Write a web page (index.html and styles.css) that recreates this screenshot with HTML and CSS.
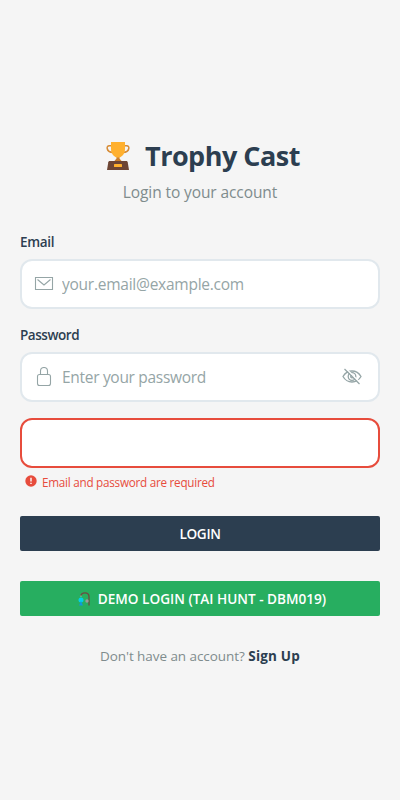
FILE: index.html
```html
<!DOCTYPE html>
<html lang="en">
<head>
<meta charset="utf-8">
<title>Trophy Cast</title>
<link rel="stylesheet" href="styles.css">
</head>
<body>
<main class="login">
  <h1 class="title">
    <svg class="trophy" viewBox="0 0 24 28" aria-hidden="true">
      <path d="M6 3.700H3.300C1.500 3.700.9 5 1.200 6.500c.4 2.300 2.800 3.800 5.800 4M18 3.700h2.700c1.800 0 2.400 1.300 2.100 2.800-.4 2.300-2.800 3.800-5.800 4" fill="none" stroke="#d68b35" stroke-width="1.500"/>
      <path d="M10.500 13h3v3.500l2.500 3H8l2.500-3z" fill="#cb7f2c"/>
      <path d="M5 0h14v7c0 4-2.500 7.500-5.500 8.500h-3C7.500 14.500 5 11 5 7z" fill="#ffb02e"/>
      <path d="M4 19h16c1 0 1.500.5 1.700 1.300L23 28H1l1.300-7.700C2.500 19.500 3 19 4 19z" fill="#6d4534"/>
      <rect x="8" y="22" width="8" height="3" rx=".5" fill="#ffb02e"/>
    </svg>
    <span class="title-text">Trophy Cast</span>
  </h1>
  <p class="subtitle">Login to your account</p>

  <form class="form">
    <label class="label" for="email">Email</label>
    <div class="field">
      <svg class="icon" viewBox="0 0 20 20" aria-hidden="true"><path d="M1.500 3.500h17v12h-17zM3.500 5.500l6.500 5.500L16.500 5.500"/></svg>
      <input class="input email" id="email" type="text" placeholder="your.email@example.com">
    </div>

    <label class="label label-password" for="password">Password</label>
    <div class="field">
      <svg class="icon" viewBox="0 0 20 20" aria-hidden="true"><rect x="3.500" y="7.500" width="13" height="11" rx="2"/><path d="M6.500 7.500V4a3.500 3.500 0 0 1 7 0v3.500"/></svg>
      <input class="input password" id="password" type="password" placeholder="Enter your password">
      <svg class="icon eye" viewBox="0 0 20 20" aria-hidden="true"><path d="M1 9.500c2-3.500 5.200-5.500 9-5.500s7 2 9 5.500c-2 3.500-5.200 5.500-9 5.500S3 13 1 9.500z"/><circle cx="10" cy="9.500" r="3.800"/><circle cx="10" cy="9.500" r="1.300"/><path class="slash-gap" d="M4 1.500l14.500 14.500"/><path d="M2.500 2l15 15"/></svg>
    </div>

    <div class="field field-error"></div>
    <p class="error">
      <svg class="alert" viewBox="0 0 12 12" aria-hidden="true"><circle cx="6" cy="6" r="5.700"/><path d="M6 2.800v3.700M6 7.700v1.300"/></svg>
      <span>Email and password are required</span>
    </p>

    <button class="button" type="button"><span class="login-text">LOGIN</span></button>
    <button class="button demo" type="button">
      <svg class="fishing" viewBox="0 0 13 14" aria-hidden="true">
        <path d="M3 4C3 1.500 5 .8 7 .8c3 0 4 1.500 4 4V13.500" fill="none" stroke="#6d4c41" stroke-width="1.300"/>
        <circle cx="3" cy="8" r="2.500" fill="#00d2e8"/><path d="M3 9l2 4.500H1z" fill="#1298dc"/>
        <circle cx="9" cy="9" r="1.700" fill="#9b9b9b"/><circle cx="3" cy="4" r=".6" fill="#d2e4df"/>
      </svg>
      <span class="demo-text">DEMO LOGIN (TAI HUNT - DBM019)</span>
    </button>
  </form>
  <p class="signup"><span class="question">Don't have an account?</span> <a class="link">Sign Up</a></p>
</main>
</body>
</html>
```
FILE: styles.css
```css
* { box-sizing: border-box; }
body {
  margin: 0;
  min-height: 800px;
  background: #f5f5f5;
  color: #2c3e50;
  font-family: "Open Sans", "Noto Sans", sans-serif;
}
.login { padding: 138px 20px 0; }
.title {
  display: flex;
  justify-content: center;
  align-items: center;
  gap: 15px;
  height: 36px;
  margin: 0;
  padding-left: 6px;
  font-size: 27px;
  line-height: 36px;
}
.trophy { width: 24px; height: 28px; }
.title-text { letter-spacing: -0.5px; }
.subtitle {
  margin: 7px 0 0;
  text-align: center;
  font-size: 15.5px;
  line-height: 23px;
  letter-spacing: -0.1px;
  color: #7f8c8d;
}
.form { display: flex; flex-direction: column; margin-top: 29px; }
.label {
  height: 19px;
  margin-bottom: 7px;
  font-size: 13.5px;
  font-weight: 600;
  line-height: 19px;
  letter-spacing: -0.3px;
}
.label-password { margin-top: 17px; letter-spacing: -0.45px; }
.field {
  display: flex;
  align-items: center;
  height: 50px;
  padding: 0 16px 0 12px;
  border: 2px solid #e1e8ed;
  border-radius: 12px;
  background: #fff;
}
.icon {
  flex: none;
  width: 20px;
  height: 20px;
  fill: none;
  stroke: #95a5a6;
  stroke-width: 1.1;
}
.eye { stroke-width: 1.3; }
.eye .slash-gap { stroke: #fff; stroke-width: 1.5; }
.input {
  flex: 1;
  min-width: 0;
  margin: 0 0 0 8px;
  padding: 0;
  border: 0;
  outline: 0;
  background: none;
  font-family: inherit;
  font-size: 15.5px;
  letter-spacing: -0.25px;
}
.password { letter-spacing: -0.3px; }
.input::placeholder { color: #95a5a6; opacity: 1; }
.field-error { margin-top: 16px; border-color: #e74c3c; }
.error {
  display: flex;
  align-items: center;
  gap: 5px;
  height: 16px;
  margin: 6px 0 26px 5px;
  font-size: 11.7px;
  line-height: 16px;
  letter-spacing: -0.25px;
  color: #e74c3c;
}
.alert { width: 12px; height: 12px; margin-top: -3px; fill: #e74c3c; }
.alert path { stroke: #fff; stroke-width: 1.4; }
.button {
  display: flex;
  justify-content: center;
  align-items: center;
  height: 35px;
  padding: 0;
  border: 0;
  border-radius: 2px;
  background: #2c3e50;
  color: #fff;
  font-family: inherit;
  font-size: 13.6px;
  font-weight: 600;
  line-height: 19px;
}
.login-text { letter-spacing: -0.3px; }
.demo { gap: 7px; margin-top: 30px; padding-left: 4px; background: #27ae60; }
.fishing { width: 13px; height: 14px; }
.signup {
  margin: 30px 0 0;
  text-align: center;
  font-size: 13.5px;
  line-height: 21px;
}
.question { color: #7f8c8d; letter-spacing: -0.06px; }
.link { font-weight: 700; letter-spacing: 0.2px; }
```
